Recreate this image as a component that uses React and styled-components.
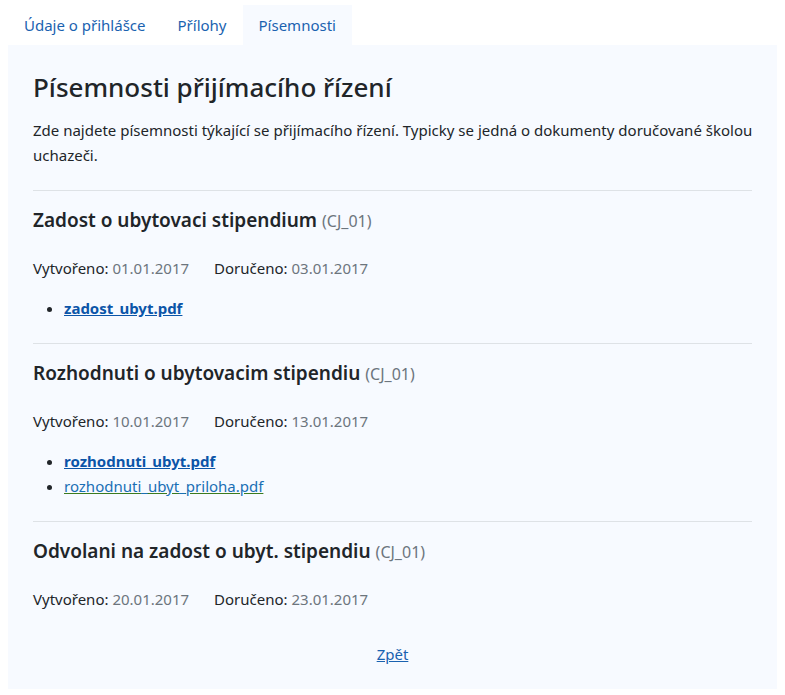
import styled, { createGlobalStyle } from "styled-components";

const GlobalStyle = createGlobalStyle`
  body {
    margin: 5px 8px 8px;
    background: #ffffff;
    font-family: "Noto Sans", "Open Sans", sans-serif;
    color: #212529;
  }
`;

const TABS = ["Údaje o přihlášce", "Přílohy", "Písemnosti"];

const DOCS = [
  {
    title: "Zadost o ubytovaci stipendium",
    cj: "CJ_01",
    created: "01.01.2017",
    delivered: "03.01.2017",
    files: [{ name: "zadost_ubyt.pdf", main: true }],
  },
  {
    title: "Rozhodnuti o ubytovacim stipendiu",
    cj: "CJ_01",
    created: "10.01.2017",
    delivered: "13.01.2017",
    files: [
      { name: "rozhodnuti_ubyt.pdf", main: true },
      { name: "rozhodnuti_ubyt_priloha.pdf", main: false },
    ],
  },
  {
    title: "Odvolani na zadost o ubyt. stipendiu",
    cj: "CJ_01",
    created: "20.01.2017",
    delivered: "23.01.2017",
    files: [],
  },
];

const TabBar = styled.ul`
  display: flex;
  margin: 0;
  padding: 0;
  list-style: none;
`;

const Tab = styled.li`
  padding: 0 16px;
  height: 40px;
  display: flex;
  align-items: center;
  font-size: 15px;
  color: #1a62b0;
  background: ${(p) => (p.$active ? "#f7faff" : "transparent")};
  cursor: pointer;
`;

const Panel = styled.div`
  background: #f7faff;
  padding: 27px 25px 22px;
`;

const Title = styled.h1`
  margin: 0;
  font-size: 26px;
  line-height: 31px;
  font-weight: 500;
`;

const Intro = styled.p`
  margin: 15px -14px 22px 0;
  font-size: 15px;
  line-height: 25px;
`;

const Section = styled.section`
  border-top: 1px solid #dee2e6;
  padding: 18px 0 22px;

  &:last-of-type {
    padding-bottom: 0;
  }
`;

const Heading = styled.h2`
  margin: 0;
  font-size: 19px;
  line-height: 23px;
  font-weight: 600;
`;

const Cj = styled.span`
  font-size: 16px;
  font-weight: 400;
  color: #6c757d;
`;

const Meta = styled.div`
  display: flex;
  gap: 25px;
  margin-top: 23px;
  font-size: 15px;
  line-height: 25px;
`;

const Value = styled.span`
  color: #6c757d;
`;

const Files = styled.ul`
  margin: 15px 0 0;
  padding-left: 31px;
  font-size: 15px;
  line-height: 25px;

  li {
    height: 25px;
  }
`;

const FileLink = styled.a`
  color: ${(p) => (p.$main ? "#0b55a8" : "#1a6fb5")};
  font-weight: ${(p) => (p.$main ? 700 : 400)};
  text-decoration: underline;
  text-decoration-color: ${(p) => (p.$main ? "#0b55a8" : "#3b7a1e")};
`;

const Footer = styled.div`
  text-align: center;
  margin-top: 30px;
  font-size: 15px;
  line-height: 25px;
`;

const BackLink = styled.a`
  color: #1a62b0;
  text-decoration: underline;
`;

const App = () => {
  return (
    <>
      <GlobalStyle />
      <TabBar>
        {TABS.map((tab, i) => (
          <Tab key={tab} $active={i === 2}>
            {tab}
          </Tab>
        ))}
      </TabBar>
      <Panel>
        <Title>Písemnosti přijímacího řízení</Title>
        <Intro>
          Zde najdete písemnosti týkající se přijímacího řízení. Typicky se
          jedná o dokumenty doručované školou uchazeči.
        </Intro>
        {DOCS.map((doc) => (
          <Section key={doc.title}>
            <Heading>
              {doc.title} <Cj>({doc.cj})</Cj>
            </Heading>
            <Meta>
              <span>
                Vytvořeno: <Value>{doc.created}</Value>
              </span>
              <span>
                Doručeno: <Value>{doc.delivered}</Value>
              </span>
            </Meta>
            {doc.files.length > 0 && (
              <Files>
                {doc.files.map((f) => (
                  <li key={f.name}>
                    <FileLink href="#" $main={f.main}>
                      {f.name}
                    </FileLink>
                  </li>
                ))}
              </Files>
            )}
          </Section>
        ))}
        <Footer>
          <BackLink href="#">Zpět</BackLink>
        </Footer>
      </Panel>
    </>
  );
};

export default App;
